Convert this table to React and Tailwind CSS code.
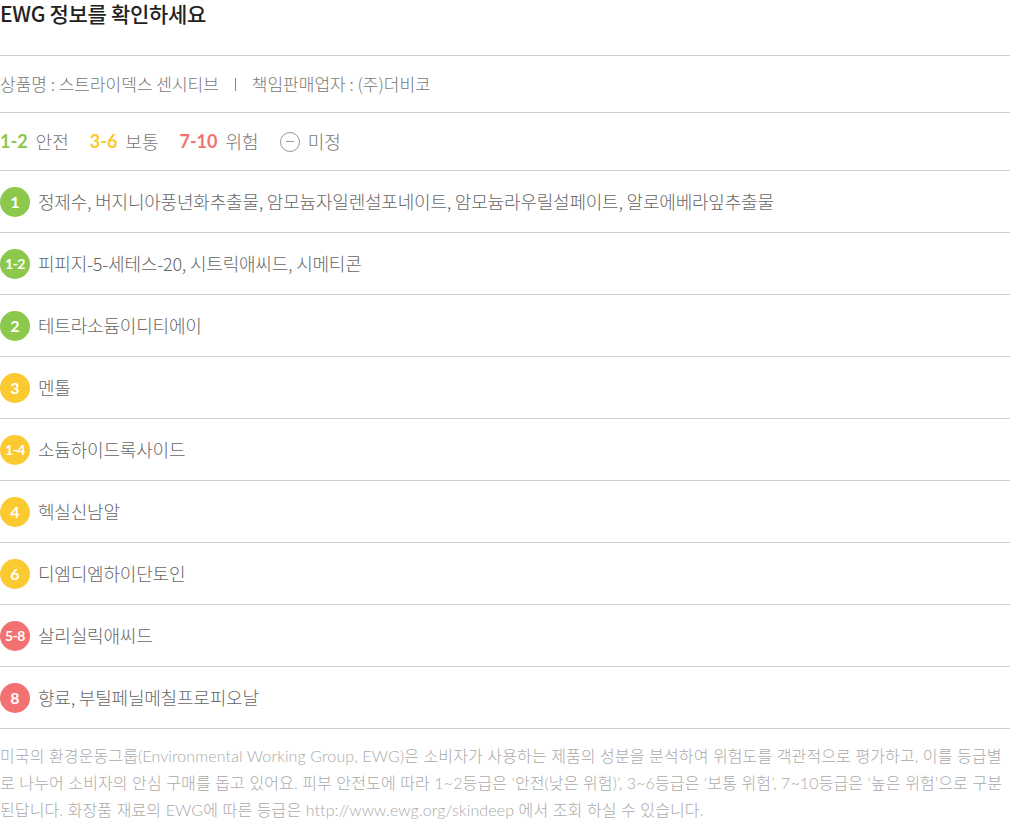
import React from "react";

const items = [
  { grade: "1", color: "bg-[#8cc84b]", name: "정제수, 버지니아풍년화추출물, 암모늄자일렌설포네이트, 암모늄라우릴설페이트, 알로에베라잎추출물" },
  { grade: "1-2", color: "bg-[#8cc84b]", name: "피피지-5-세테스-20, 시트릭애씨드, 시메티콘" },
  { grade: "2", color: "bg-[#8cc84b]", name: "테트라소듐이디티에이" },
  { grade: "3", color: "bg-[#fbc930]", name: "멘톨" },
  { grade: "1-4", color: "bg-[#fbc930]", name: "소듐하이드록사이드" },
  { grade: "4", color: "bg-[#fbc930]", name: "헥실신남알" },
  { grade: "6", color: "bg-[#fbc930]", name: "디엠디엠하이단토인" },
  { grade: "5-8", color: "bg-[#f47171]", name: "살리실릭애씨드" },
  { grade: "8", color: "bg-[#f47171]", name: "향료, 부틸페닐메칠프로피오날" },
];

const kr = "font-['Noto_Sans_CJK_KR','Noto_Sans',sans-serif]";
const num = "font-['Lato','Noto_Sans_CJK_KR',sans-serif]";

function Badge({ grade, color }) {
  return (
    <span
      className={`${color} ${num} shrink-0 w-[30px] h-[30px] rounded-full flex items-center justify-center text-white font-bold ${
        grade.length > 1 ? "text-[14px] tracking-[-0.5px]" : "text-[16px]"
      }`}
    >
      {grade}
    </span>
  );
}

export default function App() {
  return (
    <div className={`${kr} w-[1010px] bg-white text-[#666]`}>
      {/* Title */}
      <div className="h-[56px] border-b border-[#cfcfcf]">
        <h2 className="text-[21px] leading-[26px] font-medium text-[#222] tracking-[-0.3px]">
          EWG 정보를 확인하세요
        </h2>
      </div>

      {/* Product */}
      <div className="h-[57px] flex items-center border-b border-[#cfcfcf] text-[17px] font-light text-[#777]">
        <span>상품명 : 스트라이덱스 센시티브</span>
        <span className="mx-[16px] w-px h-[13px] bg-[#888]" />
        <span>책임판매업자 : (주)더비코</span>
      </div>

      {/* Legend */}
      <div className="h-[58px] flex items-center border-b border-[#cfcfcf] text-[18px] font-light text-[#777]">
        <span className={`${num} font-bold text-[#8cc84b]`}>1-2</span>
        <span className="ml-[8px]">안전</span>
        <span className={`${num} font-bold text-[#fbc930] ml-[21px]`}>3-6</span>
        <span className="ml-[8px]">보통</span>
        <span className={`${num} font-bold text-[#f47171] ml-[21px]`}>7-10</span>
        <span className="ml-[8px]">위험</span>
        <span className="ml-[21px] w-[20px] h-[20px] rounded-full border-[1.5px] border-[#999] flex items-center justify-center">
          <span className="w-[8px] h-[1.5px] bg-[#999]" />
        </span>
        <span className="ml-[8px]">미정</span>
      </div>

      {/* Ingredients */}
      {items.map((it, i) => (
        <div
          key={i}
          className="h-[62px] flex items-center gap-[8px] border-b border-[#cfcfcf]"
        >
          <Badge grade={it.grade} color={it.color} />
          <span className="text-[18px] font-light text-[#666] tracking-[-0.2px]">
            {it.name}
          </span>
        </div>
      ))}

      {/* Footer */}
      <p className="pt-[13px] font-['Lato','Noto_Sans_CJK_KR',sans-serif] text-[16px] leading-[27px] font-light text-[#aaa] tracking-[0.12px]">
        미국의 환경운동그룹(Environmental Working Group, EWG)은 소비자가 사용하는 제품의 성분을 분석하여 위험도를 객관적으로 평가하고, 이를 등급별로 나누어 소비자의 안심 구매를 돕고 있어요. 피부 안전도에 따라 1~2등급은 ‘안전(낮은 위험)’, 3~6등급은 ‘보통 위험’, 7~10등급은 ‘높은 위험’으로 구분된답니다. 화장품 재료의 EWG에 따른 등급은 http://www.ewg.org/skindeep 에서 조회 하실 수 있습니다.
      </p>
    </div>
  );
}
